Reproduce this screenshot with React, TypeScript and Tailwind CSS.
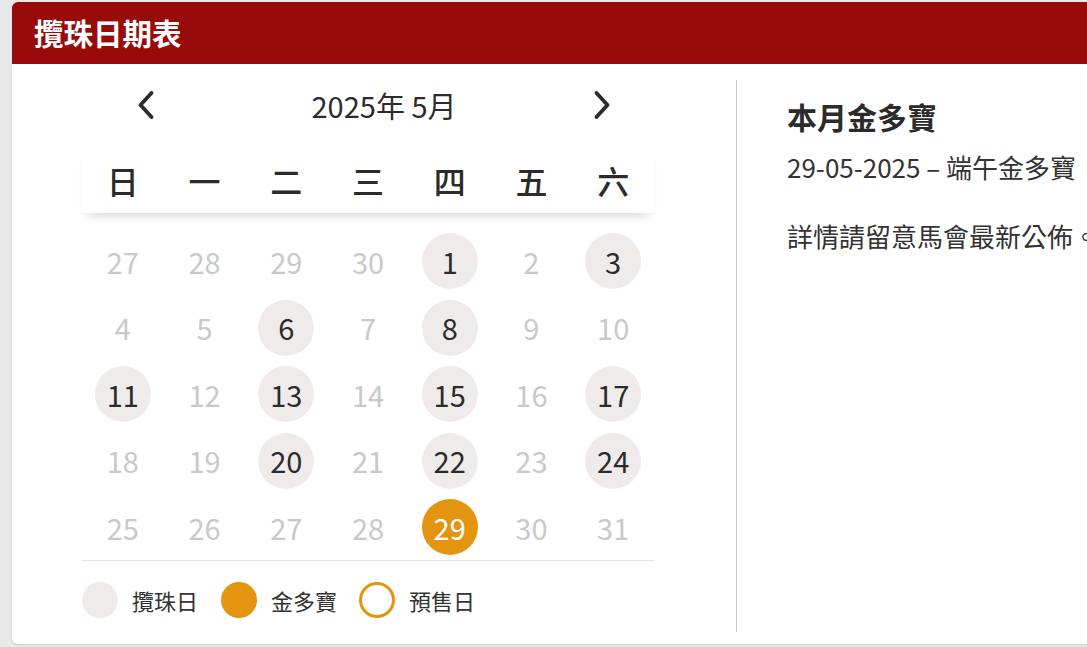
const WEEKDAYS = ['日', '一', '二', '三', '四', '五', '六'];

type Day = { n: number; muted?: boolean; race?: boolean; gold?: boolean };

const raceDays = [1, 3, 6, 8, 11, 13, 15, 17, 20, 22, 24];

const days: Day[] = [
  { n: 27, muted: true },
  { n: 28, muted: true },
  { n: 29, muted: true },
  { n: 30, muted: true },
  ...Array.from({ length: 31 }, (_, i) => {
    const n = i + 1;
    if (n === 29) return { n, gold: true };
    return raceDays.includes(n) ? { n, race: true } : { n, muted: true };
  }),
];

function Chevron({ dir }: { dir: 'left' | 'right' }) {
  return (
    <svg width="20" height="30" viewBox="0 0 20 30" fill="none">
      <path
        d={dir === 'left' ? 'M15.5 3 L4.5 15 L15.5 27' : 'M4.5 3 L15.5 15 L4.5 27'}
        stroke="#2b2b2b"
        strokeWidth="3.8"
        strokeLinecap="round"
        strokeLinejoin="round"
      />
    </svg>
  );
}

function DayCell({ day }: { day: Day }) {
  let cls = 'text-[#c9c9c9]';
  if (day.race) cls = 'bg-[#f0ebeb] text-[#2b2b2b]';
  if (day.gold) cls = 'bg-[#e3950f] text-white';
  return (
    <div className="flex justify-center">
      <div
        className={`flex h-[56px] w-[56px] items-center justify-center rounded-full text-[29px] leading-none ${cls}`}
      >
        {day.n}
      </div>
    </div>
  );
}

export default function App() {
  return (
    <div className="h-[647px] w-[1087px] overflow-hidden bg-[#e9e9e9] pl-[12px] pt-[2px] font-['Noto_Sans_CJK_TC','Noto_Sans',sans-serif] text-[#2b2b2b]">
      <div className="h-[642px] w-[1100px] overflow-hidden rounded-[6px] bg-white shadow-[0_1px_2px_rgba(0,0,0,0.12)]">
        <div className="flex h-[62px] items-center bg-[#990b0b] pl-[22px]">
          <h1 className="text-[29.5px] font-bold leading-none text-white">攬珠日期表</h1>
        </div>

        <div className="flex pt-[16px]">
          <div className="ml-[70px] w-[572px]">
            <div className="flex h-[50px] items-center">
              <button className="ml-[54px] flex w-[20px] justify-center">
                <Chevron dir="left" />
              </button>
              <div className="flex-1 pl-[20px] text-center text-[29px] leading-none">2025年 5月</div>
              <button className="mr-[42px] flex w-[20px] justify-center">
                <Chevron dir="right" />
              </button>
            </div>

            <div className="relative z-10 mt-[19px] grid h-[64px] grid-cols-7 items-center bg-white pb-[2px] shadow-[0_8px_10px_-6px_rgba(0,0,0,0.18)]">
              {WEEKDAYS.map((w) => (
                <div key={w} className="text-center text-[32px] font-medium leading-none">
                  {w}
                </div>
              ))}
            </div>

            <div className="grid grid-cols-7 gap-y-[10.5px] pt-[20px]">
              {days.map((d, i) => (
                <DayCell key={i} day={d} />
              ))}
            </div>

            <div className="mt-[5px] border-t border-[#e4e4e4]" />

            <div className="mt-[21px] flex h-[36px] items-center text-[22px] leading-none text-[#333]">
              <span className="h-[36px] w-[36px] rounded-full bg-[#f0ebeb]" />
              <span className="ml-[14px]">攬珠日</span>
              <span className="ml-[23px] h-[36px] w-[36px] rounded-full bg-[#e3950f]" />
              <span className="ml-[14px]">金多寶</span>
              <span className="ml-[22px] h-[36px] w-[36px] rounded-full border-[3px] border-[#e3950f]" />
              <span className="ml-[14px]">預售日</span>
            </div>
          </div>

          <div className="ml-[82px] h-[552px] w-px bg-[#c8c8c8]" />

          <div className="pl-[50px] whitespace-nowrap">
            <h2 className="mt-[18px] text-[30px] font-bold leading-[36px]">本月金多寶</h2>
            <p className="mt-[17px] text-[26px] leading-[32px] text-[#333]">29-05-2025 – 端午金多寶</p>
            <p className="mt-[37px] text-[26px] leading-[32px] text-[#333]">詳情請留意馬會最新公佈。</p>
          </div>
        </div>
      </div>
    </div>
  );
}
